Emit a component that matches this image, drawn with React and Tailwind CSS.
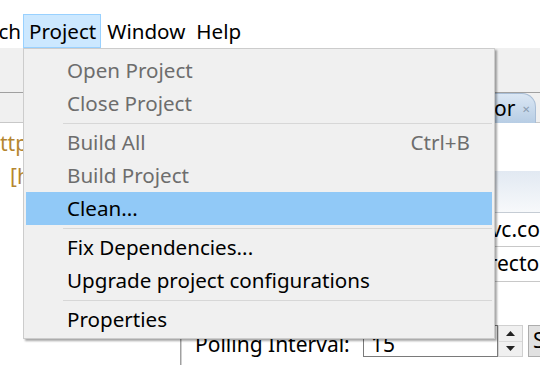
import React from "react";

const MENU_ITEMS = [
  { label: "Open Project", disabled: true },
  { label: "Close Project", disabled: true },
  { sep: true },
  { label: "Build All", disabled: true, shortcut: "Ctrl+B" },
  { label: "Build Project", disabled: true },
  { label: "Clean...", active: true },
  { sep: true },
  { label: "Fix Dependencies..." },
  { label: "Upgrade project configurations" },
  { sep: true },
  { label: "Properties" },
];

const FONT = { fontFamily: '"Noto Sans", "Open Sans", sans-serif' };

const ProjectMenu = () => (
  <div className="absolute left-[23px] top-[48px] w-[472px] border border-[#cccccc] bg-[#f0f0f0] pt-[5px] pb-[2px] shadow-[2px_2px_2px_rgba(0,0,0,0.35)]">
    {MENU_ITEMS.map((item, i) =>
      item.sep ? (
        <div key={i} className="h-[6px] flex items-center pl-[39px] pr-[2px]">
          <div className="h-px w-full bg-[#d7d7d7]"></div>
        </div>
      ) : (
        <div
          key={i}
          className={`h-[33px] mx-[2px] flex items-center justify-between pl-[41px] pr-[22px] text-[20.6px] ${
            item.active ? "bg-[#91c9f7]" : ""
          } ${item.disabled ? "text-[#6d6d6d]" : "text-black"}`}
        >
          <span>{item.label}</span>
          {item.shortcut && <span>{item.shortcut}</span>}
        </div>
      )
    )}
  </div>
);

const App = () => {
  return (
    <div className="relative w-[540px] h-[365px] overflow-hidden bg-white" style={FONT}>
      {/* MENU BAR */}
      <div className="h-[48px] flex items-end text-[20.6px] text-black">
        <span className="w-[23px] h-[34px] flex items-center justify-end overflow-hidden pr-[2px]">ch</span>
        <span className="h-[34px] flex items-center pl-[5px] pr-[4px] bg-[#cce8ff] border border-[#99d1ff]">
          Project
        </span>
        <span className="h-[34px] flex items-center px-[6px]">Window</span>
        <span className="h-[34px] flex items-center px-[5px]">Help</span>
      </div>

      {/* TOOLBAR */}
      <div className="h-[45px] bg-[#f0f0f0] border-b border-[#a0a0a0]"></div>

      {/* TAB ROW */}
      <div className="h-[30px] flex bg-[#f0f0f0]">
        <div className="flex-1 border-b border-[#c8c8c8]"></div>
        <div className="w-[42px] h-[30px] flex items-center gap-[7px] pl-[2px] rounded-tr-[14px] bg-gradient-to-b from-[#dbe7f4] to-[#b7cde4] border-t border-r border-[#a9bed6] text-[21px] text-black">
          <span className="-ml-[2px]">or</span>
          <span className="text-[10px] text-[#8a9cb0] leading-none">✕</span>
        </div>
        <div className="w-[4px] border-b border-[#c8c8c8]"></div>
      </div>

      {/* CONTENT */}
      <div className="flex h-[243px]">
        {/* EDITOR */}
        <div className="w-[181px] border-r border-[#a0a0a0] text-[21px] text-[#b5862f] pt-[4px]">
          <div className="h-[33px] flex items-center whitespace-nowrap">ttp://maven.apache.org</div>
          <div className="h-[33px] flex items-center pl-[10px] whitespace-nowrap">[http]</div>
        </div>
        <div className="w-[3px] border-r border-[#d0d0d0]"></div>

        {/* FORM */}
        <div className="flex-1 flex flex-col text-[21px] text-black">
          <div className="h-[48px]"></div>
          <div className="h-[42px] bg-gradient-to-b from-[#e2e9f2] to-[#f7f9fb] border-b border-[#c5ccd4]"></div>
          <div className="h-[34px] flex items-center pl-[14px] border-b border-[#c8c8c8] whitespace-nowrap">
            <span className="w-[163px]">URL:</span>
            <span className="pl-[20px]">http://svn.svc.com</span>
          </div>
          <div className="h-[35px] flex items-center pl-[14px] border-b border-[#c8c8c8] whitespace-nowrap">
            <span className="w-[163px]">Path:</span>
            <span className="pl-[27px]">/project/directory</span>
          </div>
          <div className="h-[43px]"></div>
          <div className="h-[32px] flex items-center">
            <span className="w-[181px] pl-[13px] pt-[7px]">Polling Interval:</span>
            <div className="w-[135px] h-[32px] flex items-center pl-[7px] pt-[7px] border border-[#7a7a7a]">15</div>
            <div className="w-[25px] h-[32px] flex flex-col border border-[#d0d0d0] bg-[#f0f0f0]">
              <div className="flex-1 flex items-center justify-center border-b border-[#d9d9d9]">
                <svg width="9" height="5" viewBox="0 0 9 5">
                  <path d="M0 5 L4.5 0 L9 5 Z" fill="#222" />
                </svg>
              </div>
              <div className="flex-1 flex items-center justify-center">
                <svg width="9" height="5" viewBox="0 0 9 5">
                  <path d="M0 0 L4.5 5 L9 0 Z" fill="#222" />
                </svg>
              </div>
            </div>
            <div className="ml-[5px] h-[32px] px-[4px] flex items-center border border-[#adadad] bg-[#e1e1e1]">
              Select
            </div>
          </div>
        </div>
      </div>

      <ProjectMenu />
    </div>
  );
};

export default App;
